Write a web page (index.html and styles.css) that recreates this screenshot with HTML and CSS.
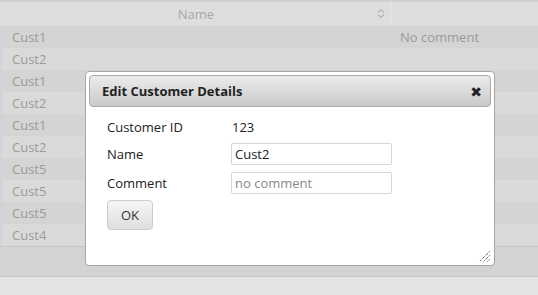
FILE: index.html
```html
<!DOCTYPE html>
<html>
<head>
<meta charset="utf-8">
<link rel="stylesheet" href="styles.css">
</head>
<body>
<div class="grid">
  <div class="head">
    <div class="hcell name">Name
      <svg class="sort" width="8" height="11" viewBox="0 0 8 11"><path d="M1 4.5 L4 1.5 L7 4.5 M1 6.5 L4 9.5 L7 6.5" fill="none" stroke="#b4b4b4" stroke-width="1.2"/></svg>
    </div>
    <div class="hcell comment"></div>
  </div>
  <div class="rows">
    <div class="row odd"><span class="c1">Cust1</span><span class="c2">No comment</span></div>
    <div class="row"><span class="c1">Cust2</span><span class="c2"></span></div>
    <div class="row odd"><span class="c1">Cust1</span><span class="c2"></span></div>
    <div class="row"><span class="c1">Cust2</span><span class="c2"></span></div>
    <div class="row odd"><span class="c1">Cust1</span><span class="c2"></span></div>
    <div class="row"><span class="c1">Cust2</span><span class="c2"></span></div>
    <div class="row odd"><span class="c1">Cust5</span><span class="c2"></span></div>
    <div class="row"><span class="c1">Cust5</span><span class="c2"></span></div>
    <div class="row odd"><span class="c1">Cust5</span><span class="c2"></span></div>
    <div class="row"><span class="c1">Cust4</span><span class="c2"></span></div>
  </div>
  <div class="foot"></div>
</div>
<div class="below"></div>

<div class="dialog">
  <div class="titlebar">
    <span class="title">Edit Customer Details</span>
    <span class="close">✖</span>
  </div>
  <div class="content">
    <div class="field"><span class="label">Customer ID</span><span class="value">123</span></div>
    <div class="field"><span class="label">Name</span><input class="input" type="text" value="Cust2"></div>
    <div class="field"><span class="label">Comment</span><input class="input" type="text" placeholder="no comment"></div>
    <button class="ok">OK</button>
  </div>
  <svg class="resize" width="11" height="11" viewBox="0 0 11 11"><path d="M10.5 0.5 L0.5 10.5 M10.5 4.5 L4.5 10.5 M10.5 8.5 L8.5 10.5" stroke="#222" stroke-width="1" stroke-dasharray="1 1" fill="none"/></svg>
</div>
</body>
</html>
```
FILE: styles.css
```css
html, body {
  margin: 0;
  padding: 0;
  background: #e4e4e4;
  font-family: "Open Sans", "DejaVu Sans", sans-serif;
  font-size: 13px;
}
.grid {
  border-top: 2px solid #cfcfcf;
  background: #d8d8d8;
}
.head {
  display: flex;
  height: 24px;
  background: #dedede;
  color: #a8a8a8;
}
.hcell {
  display: flex;
  align-items: center;
}
.hcell.name {
  width: 388px;
  margin-left: 2px;
  justify-content: center;
  position: relative;
  border-right: 2px solid #e2e2e2;
}
.sort {
  position: absolute;
  right: 5px;
  top: 6px;
}
.hcell.comment {
  flex: 1;
}
.rows {
  border-left: 2px solid #d2d2de;
}
.row {
  display: flex;
  height: 22px;
  align-items: center;
  color: #9a9a9a;
  background: #dadada;
}
.row.odd {
  background: #d4d4d4;
}
.c1 {
  width: 388px;
  padding-left: 10px;
  box-sizing: border-box;
}
.c2 {
  padding-left: 10px;
}
.foot {
  height: 29px;
  border-top: 1px solid #c6c6c6;
  background: #d3d3d3;
  border-bottom: 1px solid #c6c6c6;
}
.below {
  height: 20px;
}
.dialog {
  position: absolute;
  left: 85px;
  top: 71px;
  width: 402px;
  height: 187px;
  padding: 3px;
  background: #fff;
  border: 1px solid #a6a6a6;
  border-radius: 4px;
}
.titlebar {
  display: flex;
  align-items: center;
  justify-content: space-between;
  height: 30px;
  padding: 0 8px 0 12px;
  border: 1px solid #aaa;
  border-radius: 4px;
  background: linear-gradient(#ececec, #c9c9c9);
}
.title {
  font-weight: bold;
  color: #222;
  font-size: 13px;
}
.close {
  font-size: 14px;
  color: #222;
}
.content {
  padding: 8px 0 0 18px;
  color: #222;
}
.field {
  display: flex;
  align-items: center;
  height: 29px;
}
.field:first-child {
  height: 24px;
}
.label {
  width: 124px;
}
.value {
  padding-left: 1px;
}
.input {
  width: 161px;
  height: 22px;
  box-sizing: border-box;
  border: 1px solid #d6d6d6;
  border-radius: 2px;
  padding: 0 4px 0 3px;
  font-family: inherit;
  font-size: 13px;
  color: #222;
  margin: 0;
}
.input::placeholder {
  color: #888;
}
.ok {
  margin-top: 3px;
  width: 46px;
  height: 30px;
  border: 1px solid #cdcdcd;
  border-radius: 4px;
  background: linear-gradient(#f6f6f6, #dedede);
  font-family: inherit;
  font-size: 13px;
  color: #333;
}
.resize {
  position: absolute;
  right: 4px;
  bottom: 3px;
}
```
